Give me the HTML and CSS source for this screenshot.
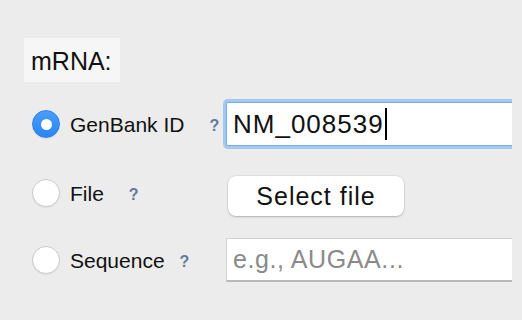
FILE: index.html
```html
<!DOCTYPE html>
<html lang="en">
<head>
    <meta charset="UTF-8">
    <meta name="viewport" content="width=device-width, initial-scale=1.0">
    <title>mRNA input</title>
    <link rel="stylesheet" href="styles.css">
</head>
<body>

<div class="panel">
    <div class="section-title">mRNA:</div>

    <div class="source-list">
        <div class="source-row">
            <div class="source-label">
                <span class="radio checked"></span>
                <span class="label-text">GenBank ID</span>
                <span class="help">?</span>
            </div>
            <div class="field field-focus">NM_008539<span class="caret"></span></div>
        </div>

        <div class="source-row">
            <div class="source-label">
                <span class="radio"></span>
                <span class="label-text">File</span>
                <span class="help">?</span>
            </div>
            <button class="file-button">Select file</button>
        </div>

        <div class="source-row">
            <div class="source-label">
                <span class="radio"></span>
                <span class="label-text">Sequence</span>
                <span class="help help-near">?</span>
            </div>
            <div class="field placeholder">e.g., AUGAA...</div>
        </div>
    </div>
</div>

</body>
</html>
```

FILE: styles.css
```css
body {
    margin: 0;
    padding: 0;
    background: #ececec;
    font-family: "Liberation Sans", Arial, sans-serif;
    color: #111;
}

.panel {
    width: 512px;
    height: 320px;
    overflow: hidden;
    padding-top: 38px;
    box-sizing: border-box;
}

.section-title {
    display: inline-block;
    margin-left: 24px;
    width: 96px;
    height: 44px;
    line-height: 46px;
    padding-left: 7px;
    box-sizing: border-box;
    background: #f6f6f6;
    font-size: 25px;
}

.source-list {
    margin-top: 20px;
    display: flex;
    flex-direction: column;
    gap: 24px;
}

.source-row {
    display: grid;
    grid-template-columns: 194px 1fr;
    padding-left: 32px;
    height: 44px;
    align-items: center;
}

.source-label {
    display: flex;
    align-items: center;
    font-size: 21px;
}

.radio {
    width: 28px;
    height: 28px;
    border-radius: 50%;
    box-sizing: border-box;
    background: #fff;
    border: 1px solid #cbcbcb;
    box-shadow: 0 1px 1px rgba(0, 0, 0, 0.06);
    margin-right: 10px;
    position: relative;
}

.radio.checked {
    background: linear-gradient(#4a9cf8, #2a86f3);
    border-color: #2d82ec;
}

.radio.checked::after {
    content: "";
    position: absolute;
    left: 7.5px;
    top: 7.5px;
    width: 11px;
    height: 11px;
    border-radius: 50%;
    background: #fff;
}

.label-text {
    padding-top: 2px;
}

.help {
    margin-left: 25px;
    font-size: 16px;
    font-weight: bold;
    color: #5f7c9b;
    padding-top: 4px;
}

.help-near {
    margin-left: 15px;
}

.field {
    width: 320px;
    height: 44px;
    box-sizing: border-box;
    background: #fff;
    border: 1px solid #d2d2d2;
    border-bottom: 2px solid #b9b9b9;
    padding-left: 6px;
    display: flex;
    align-items: center;
    font-size: 26px;
    letter-spacing: 1px;
}

.field-focus {
    border: 1px solid #79aaea;
    box-shadow: 0 0 0 3px #a3c8f3;
    border-radius: 2px;
}

.placeholder {
    color: #8a8a8a;
    font-size: 25px;
    letter-spacing: 0.6px;
}

.caret {
    display: inline-block;
    width: 2px;
    height: 32px;
    background: #000;
    margin-left: 1px;
}

.file-button {
    justify-self: start;
    margin-top: 6px;
    margin-left: 2px;
    width: 176px;
    height: 40px;
    border: none;
    border-radius: 8px;
    background: #fff;
    box-shadow: 0 1px 2px rgba(0, 0, 0, 0.22), 0 0 0 0.5px rgba(0, 0, 0, 0.08);
    font-family: "Liberation Sans", Arial, sans-serif;
    font-size: 25px;
    letter-spacing: 1px;
    color: #111;
    padding: 0;
}
```
